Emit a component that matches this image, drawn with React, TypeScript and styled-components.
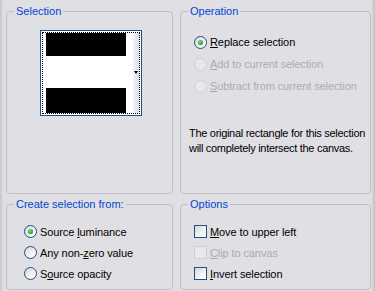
import React from "react";
import styled, { createGlobalStyle } from "styled-components";

const GlobalStyle = createGlobalStyle`
  html, body {
    margin: 0;
    padding: 0;
    background: #e0dfe3;
  }
  body {
    font-family: "Liberation Sans", Arial, sans-serif;
    font-size: 11px;
    color: #000;
  }
`;

const Dialog = styled.div`
  width: 375px;
  height: 291px;
  box-sizing: border-box;
  padding: 5px 0 0 6px;
  display: grid;
  grid-template-columns: 167px 191px;
  grid-template-rows: 189px 92px;
  column-gap: 7px;
  row-gap: 4px;
  background: linear-gradient(
    to right,
    #c4c3c9 0,
    #d8d7dc 2px,
    #e0dfe3 4px,
    #e0dfe3 371px,
    #d3d2d8 373px,
    #bdbcc2 375px
  );
`;

const Group = styled.fieldset`
  margin: 0;
  padding: 0;
  min-width: 0;
  box-sizing: border-box;
  border: 1px solid #c0bfc7;
  border-radius: 4px;
`;

const Title = styled.legend`
  margin-left: 7px;
  padding: 0 2px;
  color: #0046d5;
  font-size: 11px;
  line-height: 13px;
`;

const Preview = styled.div`
  margin: 12px 0 0 33px;
  width: 102px;
  height: 86px;
  box-sizing: border-box;
  border: 1px solid #1c4f85;
  padding: 1px;
  background: #fff;
`;

const FocusRing = styled.div`
  height: 100%;
  box-sizing: border-box;
  border: 1px dotted #000;
  display: flex;
`;

const Swatch = styled.div`
  flex: 1;
  padding-left: 3px;
  display: flex;
  flex-direction: column;
  background: #fff;
`;

const Band = styled.div<{ $h: number }>`
  height: ${(p) => p.$h}px;
  background: #000;
`;

const Spacer = styled.div`
  flex: 1;
`;

const DropColumn = styled.div`
  width: 13px;
  display: flex;
  align-items: center;
  justify-content: flex-end;
  padding: 0 1px 2px 0;
  box-sizing: border-box;
  background: linear-gradient(to right, #fff 0, #fff 6px, #ecebf2 9px, #dddce5 13px);
`;

const Arrow = styled.span`
  width: 0;
  height: 0;
  border-left: 2.5px solid transparent;
  border-right: 2.5px solid transparent;
  border-top: 3px solid #000;
`;

const OptionList = styled.div<{ $top: number; $left: number }>`
  padding: ${(p) => p.$top}px 0 0 ${(p) => p.$left}px;
  display: flex;
  flex-direction: column;
`;

const Option = styled.label<{ $h: number; $disabled?: boolean }>`
  height: ${(p) => p.$h}px;
  display: flex;
  align-items: center;
  gap: 3px;
  color: ${(p) => (p.$disabled ? "#acabb2" : "#000")};
  white-space: nowrap;
  letter-spacing: -0.1px;
`;

const Radio = styled.span<{ $checked?: boolean; $disabled?: boolean }>`
  width: 13px;
  height: 13px;
  flex: none;
  box-sizing: border-box;
  border-radius: 50%;
  border: 1px solid ${(p) => (p.$disabled ? "#d0cfd6" : "#1c5180")};
  background: ${(p) =>
    p.$disabled ? "#e8e7ec" : "linear-gradient(135deg, #d6d5dc 0%, #f4f4f6 60%, #fff 100%)"};
  display: flex;
  align-items: center;
  justify-content: center;
  &::after {
    content: "";
    display: ${(p) => (p.$checked ? "block" : "none")};
    width: 5px;
    height: 5px;
    border-radius: 50%;
    background: radial-gradient(circle at 40% 35%, #7de37d 0, #2ba82b 60%, #1b8f1b 100%);
  }
`;

const Check = styled.span<{ $disabled?: boolean }>`
  width: 13px;
  height: 13px;
  flex: none;
  box-sizing: border-box;
  border: 1px solid ${(p) => (p.$disabled ? "#d0cfd6" : "#1c5180")};
  background: ${(p) =>
    p.$disabled ? "#e8e7ec" : "linear-gradient(135deg, #d6d5dc 0%, #f4f4f6 60%, #fff 100%)"};
`;

const Key = styled.u`
  text-decoration-thickness: 1px;
  text-underline-offset: 1px;
`;

const Note = styled.p`
  margin: 29px 0 0 8px;
  line-height: 15px;
  white-space: nowrap;
  letter-spacing: -0.3px;
`;

function App() {
  return (
    <>
      <GlobalStyle />
      <Dialog>
        <Group>
          <Title>Selection</Title>
          <Preview>
            <FocusRing>
              <Swatch>
                <Band $h={23} />
                <Spacer />
                <Band $h={25} />
              </Swatch>
              <DropColumn>
                <Arrow />
              </DropColumn>
            </FocusRing>
          </Preview>
        </Group>

        <Group>
          <Title>Operation</Title>
          <OptionList $top={13} $left={13}>
            <Option $h={22}>
              <Radio $checked />
              <span>
                <Key>R</Key>eplace selection
              </span>
            </Option>
            <Option $h={22} $disabled>
              <Radio $disabled />
              <span>
                <Key>A</Key>dd to current selection
              </span>
            </Option>
            <Option $h={22} $disabled>
              <Radio $disabled />
              <span>
                <Key>S</Key>ubtract from current selection
              </span>
            </Option>
          </OptionList>
          <Note>
            The original rectangle for this selection
            <br />
            will completely intersect the canvas.
          </Note>
        </Group>

        <Group>
          <Title>Create selection from:</Title>
          <OptionList $top={10} $left={17}>
            <Option $h={21}>
              <Radio $checked />
              <span>
                Source <Key>l</Key>uminance
              </span>
            </Option>
            <Option $h={21}>
              <Radio />
              <span>
                Any non-<Key>z</Key>ero value
              </span>
            </Option>
            <Option $h={21}>
              <Radio />
              <span>
                S<Key>o</Key>urce opacity
              </span>
            </Option>
          </OptionList>
        </Group>

        <Group>
          <Title>Options</Title>
          <OptionList $top={10} $left={13}>
            <Option $h={21}>
              <Check />
              <span>
                <Key>M</Key>ove to upper left
              </span>
            </Option>
            <Option $h={21} $disabled>
              <Check $disabled />
              <span>
                <Key>C</Key>lip to canvas
              </span>
            </Option>
            <Option $h={21}>
              <Check />
              <span>
                <Key>I</Key>nvert selection
              </span>
            </Option>
          </OptionList>
        </Group>
      </Dialog>
    </>
  );
}

export default App;
